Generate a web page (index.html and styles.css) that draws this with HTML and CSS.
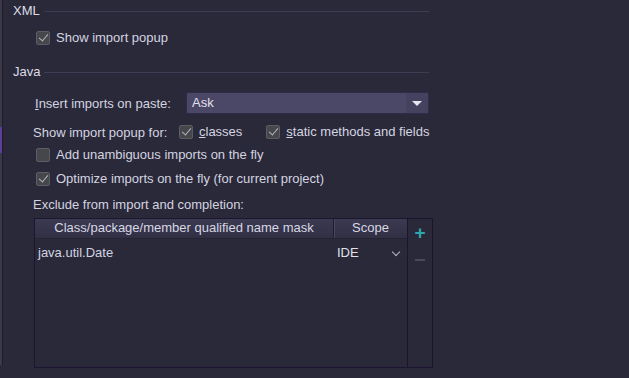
FILE: index.html
```html
<!DOCTYPE html>
<html lang="en">
<head>
  <meta charset="UTF-8">
  <title>Auto Import</title>
  <link rel="stylesheet" href="styles.css">
</head>
<body>
  <div class="page">
    <div class="gutter"><div class="gutter-mark"></div></div>
    <div class="content">
      <div class="group-title"><span>XML</span><div class="rule"></div></div>
      <div class="check xml-popup"><span class="box checked"></span>Show import popup</div>

      <div class="group-title java"><span>Java</span><div class="rule"></div></div>

      <div class="paste-row">
        <span class="paste-label"><u>I</u>nsert imports on paste:</span>
        <div class="combo">
          <span class="combo-value">Ask</span>
          <span class="combo-arrow"></span>
        </div>
      </div>

      <div class="popup-row">
        <span class="popup-label">Show import popup for:</span>
        <div class="check"><span class="box checked"></span><u>c</u>lasses</div>
        <div class="check static"><span class="box checked"></span><u>s</u>tatic methods and fields</div>
      </div>

      <div class="check unambiguous"><span class="box"></span>Add unambiguous imports on the fly</div>
      <div class="check optimize"><span class="box checked"></span>Optimize imports on the fly (for current project)</div>

      <div class="exclude-label">Exclude from import and completion:</div>

      <div class="exclude">
        <div class="table">
          <div class="thead">
            <div class="th name-col">Class/package/member qualified name mask</div>
            <div class="th scope-col">Scope</div>
          </div>
          <div class="tr">
            <div class="td name-col">java.util.Date</div>
            <div class="td scope-col">IDE<span class="chevron"></span></div>
          </div>
        </div>
        <div class="toolbar">
          <span class="tool add">+</span>
          <span class="tool remove"></span>
        </div>
      </div>
    </div>
  </div>
</body>
</html>
```

FILE: styles.css
```css
body {
  margin: 0;
  background: #2a2939;
  color: #d3d4e0;
  font-family: "Liberation Sans", Arial, sans-serif;
  font-size: 13px;
}

.page {
  display: flex;
  height: 378px;
}

/* left edge of the settings tree */
.gutter {
  width: 3px;
  height: 365px;
  background: #3a3849;
  border-right: 1px solid #1d1c27;
  padding-top: 127px;
  box-sizing: border-box;
  flex: none;
}

.gutter-mark {
  height: 26px;
  background: #5b3f99;
}

.content {
  width: 420px;
  padding: 3px 0 0 10px;
}

.group-title {
  display: flex;
  align-items: center;
  height: 16px;
  line-height: 16px;
  margin-right: 4px;
}

.group-title span {
  color: #dcdce6;
  margin-right: 4px;
}

.rule {
  flex: 1;
  height: 1px;
  background: #3e3c52;
}

.group-title.java {
  margin-top: 18px;
}

.check {
  display: flex;
  align-items: center;
  height: 16px;
  line-height: 16px;
  white-space: nowrap;
}

.box {
  width: 14px;
  height: 14px;
  box-sizing: border-box;
  border: 1px solid #5c5c63;
  background: #46464d;
  border-radius: 2px;
  margin-right: 6px;
  position: relative;
  flex: none;
}

.box.checked::after {
  content: "";
  position: absolute;
  left: 2px;
  top: 2px;
  width: 8px;
  height: 4px;
  border-left: 1.5px solid #b4b4ba;
  border-bottom: 1.5px solid #b4b4ba;
  transform: rotate(-50deg);
}

.xml-popup {
  margin: 11px 0 0 23px;
}

.paste-row {
  display: flex;
  align-items: center;
  margin: 12px 0 0 22px;
}

.paste-label {
  width: 151px;
}

.combo {
  display: flex;
  width: 243px;
  height: 22px;
  box-sizing: border-box;
  border: 1px solid #2f2b4b;
  border-radius: 2px;
  background: #4a4767;
}

.combo-value {
  flex: 1;
  padding-left: 5px;
  line-height: 20px;
  color: #e2e2ec;
}

.combo-arrow {
  width: 22px;
  background: #45425f;
  position: relative;
}

.combo-arrow::after {
  content: "";
  position: absolute;
  left: 6px;
  top: 8px;
  border-left: 5px solid transparent;
  border-right: 5px solid transparent;
  border-top: 5px solid #e6e6ee;
}

.popup-row {
  display: flex;
  align-items: center;
  height: 16px;
  margin: 10px 0 0 20px;
}

.popup-label {
  width: 146px;
}

.check.static {
  margin-left: 24px;
}

.unambiguous {
  margin: 7px 0 0 23px;
}

.optimize {
  margin: 8px 0 0 23px;
}

.exclude-label {
  margin: 10px 0 0 20px;
  height: 16px;
  line-height: 16px;
}

.exclude {
  display: flex;
  margin: 5px 0 0 21px;
  height: 150px;
  border: 1px solid #1d1530;
  width: 399px;
  box-sizing: border-box;
}

.table {
  flex: 1;
  border-right: 1px solid #1d1530;
}

.thead {
  display: flex;
  height: 19px;
  line-height: 18px;
  background: linear-gradient(#3b3a52, #302f44);
  border-bottom: 1px solid #242233;
}

.th {
  text-align: center;
  color: #d7d8e3;
}

.name-col {
  width: 298px;
  flex: none;
}

.scope-col {
  flex: 1;
}

.th.scope-col {
  border-left: 1px solid #1f1e2c;
  box-shadow: inset 1px 0 #48465e;
}

.tr {
  display: flex;
  height: 22px;
  line-height: 22px;
  margin-top: 3px;
}

.td.name-col {
  padding-left: 3px;
  box-sizing: border-box;
}

.td.scope-col {
  display: flex;
  align-items: center;
  padding-left: 4px;
  color: #e0e0ea;
}

.chevron {
  width: 5px;
  height: 5px;
  border-right: 1px solid #b8b8c4;
  border-bottom: 1px solid #b8b8c4;
  transform: rotate(45deg);
  margin: -3px 0 0 34px;
}

.toolbar {
  width: 24px;
  display: flex;
  flex-direction: column;
  align-items: center;
  padding-top: 4px;
}

.tool.add {
  color: #2ea6b0;
  font-size: 19px;
  line-height: 19px;
  font-weight: bold;
}

.tool.remove {
  width: 10px;
  height: 2px;
  background: #4a4a5c;
  margin-top: 17px;
}
```
